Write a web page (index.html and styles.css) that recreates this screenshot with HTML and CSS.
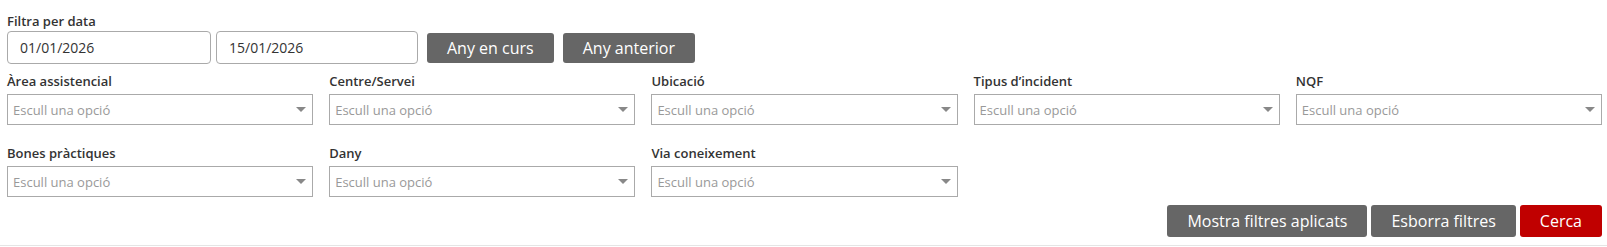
FILE: index.html
```html
<!DOCTYPE html>
<html lang="ca">
<head>
    <meta charset="UTF-8">
    <title>Filtres</title>
    <link rel="stylesheet" href="styles.css">
</head>
<body>
    <div class="filters">
        <!-- filtre per data -->
        <label class="field-label">Filtra per data</label>
        <div class="date-row">
            <input class="date-input" type="text" value="01/01/2026">
            <input class="date-input" type="text" value="15/01/2026">
            <button class="btn">Any en curs</button>
            <button class="btn">Any anterior</button>
        </div>

        <!-- desplegables -->
        <div class="select-grid">
            <div class="field">
                <label class="field-label">Àrea assistencial</label>
                <div class="select-box"><span class="placeholder">Escull una opció</span><span class="arrow"></span></div>
            </div>
            <div class="field">
                <label class="field-label">Centre/Servei</label>
                <div class="select-box"><span class="placeholder">Escull una opció</span><span class="arrow"></span></div>
            </div>
            <div class="field">
                <label class="field-label">Ubicació</label>
                <div class="select-box"><span class="placeholder">Escull una opció</span><span class="arrow"></span></div>
            </div>
            <div class="field">
                <label class="field-label">Tipus d’incident</label>
                <div class="select-box"><span class="placeholder">Escull una opció</span><span class="arrow"></span></div>
            </div>
            <div class="field">
                <label class="field-label">NQF</label>
                <div class="select-box"><span class="placeholder">Escull una opció</span><span class="arrow"></span></div>
            </div>
            <div class="field">
                <label class="field-label">Bones pràctiques</label>
                <div class="select-box"><span class="placeholder">Escull una opció</span><span class="arrow"></span></div>
            </div>
            <div class="field">
                <label class="field-label">Dany</label>
                <div class="select-box"><span class="placeholder">Escull una opció</span><span class="arrow"></span></div>
            </div>
            <div class="field">
                <label class="field-label">Via coneixement</label>
                <div class="select-box"><span class="placeholder">Escull una opció</span><span class="arrow"></span></div>
            </div>
        </div>

        <!-- accions -->
        <div class="actions">
            <button class="btn">Mostra filtres aplicats</button>
            <button class="btn">Esborra filtres</button>
            <button class="btn btn-red">Cerca</button>
        </div>
    </div>
    <div class="divider"></div>
</body>
</html>
```

FILE: styles.css
```css
body {
    margin: 0;
    font-family: "Open Sans", "Liberation Sans", sans-serif;
    color: #333;
    background: #fff;
}
.filters {
    padding: 12px 5px 0 7px;
}
.field-label {
    display: block;
    font-size: 13px;
    font-weight: 600;
    line-height: 18px;
    color: #333;
}
.date-row {
    display: flex;
    align-items: center;
    margin-top: 1px;
}
.date-input {
    box-sizing: border-box;
    width: 204px;
    height: 33px;
    margin-right: 5px;
    padding: 0 12px;
    border: 1px solid #aaa;
    border-radius: 4px;
    font-family: inherit;
    font-size: 14px;
    color: #333;
}
.date-row .date-input:nth-child(2) {
    width: 202px;
    margin-right: 9px;
}
.btn {
    box-sizing: border-box;
    height: 31px;
    padding: 0 20px;
    border: none;
    border-radius: 3px;
    background-color: #666;
    color: #fff;
    font-family: inherit;
    font-size: 16px;
    cursor: pointer;
}
.date-row .btn {
    height: 30px;
    margin-right: 9px;
}
.btn-red {
    background-color: #c00000;
}
.select-grid {
    display: grid;
    grid-template-columns: repeat(5, 1fr);
    column-gap: 16px;
    row-gap: 19px;
    margin-top: 8px;
}
.select-box {
    box-sizing: border-box;
    display: flex;
    align-items: center;
    justify-content: space-between;
    height: 31px;
    margin-top: 4px;
    padding: 0 6px 0 5px;
    border: 1px solid #aaa;
    background: #fff;
}
.placeholder {
    font-size: 13px;
    color: #999;
}
.arrow {
    width: 0;
    height: 0;
    border-style: solid;
    border-width: 5px 5px 0 5px;
    border-color: #888 transparent transparent transparent;
}
.actions {
    display: flex;
    justify-content: flex-end;
    gap: 4px;
    margin-top: 8px;
}
.actions .btn {
    height: 32px;
}
.divider {
    margin-top: 8px;
    border-top: 1px solid #e5e5e5;
}
```
